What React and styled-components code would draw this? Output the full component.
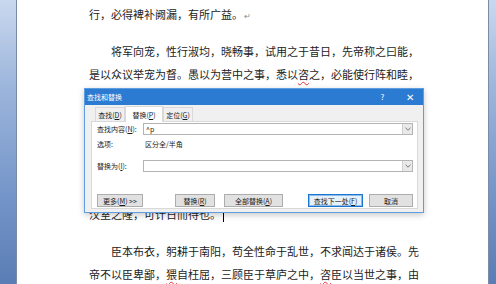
import React from 'react';
import styled, { createGlobalStyle } from 'styled-components';

const Global = createGlobalStyle`
  html, body { margin: 0; padding: 0; }
  body {
    width: 496px;
    height: 284px;
    overflow: hidden;
    background: #fff;
    font-family: "Noto Sans CJK SC", "Noto Sans", sans-serif;
  }
`;

const Frame = styled.div`
  position: relative;
  display: flex;
  width: 496px;
  height: 284px;
  overflow: hidden;
`;

// blue workspace on both sides of the page
const Side = styled.div`
  flex: none;
  width: ${p => p.$w}px;
  background: linear-gradient(180deg, #c9d8ee 0%, #9db6dc 30%, #7394c8 70%, #5a7db5 100%);
  border-${p => p.$edge}: 1px solid #7d8ca6;
`;

const Page = styled.div`
  flex: 1;
  background: #fff;
  padding: 3px 0 0 72px;
`;

const Para = styled.div`
  margin-top: ${p => p.$gap ?? 14}px;
  &:first-child { margin-top: 0; }
`;

const Line = styled.div`
  height: 23px;
  line-height: 23px;
  font-size: 11px;
  color: #1c1c1c;
  white-space: nowrap;
  padding-left: ${p => (p.$indent ? 22 : 0)}px;
`;

const Typo = styled.span`
  text-decoration: underline wavy #e03030;
  text-decoration-thickness: 1px;
  text-underline-offset: 2px;
`;

const Mark = styled.span`
  font-size: 8px;
  color: #8a8a8a;
  margin-left: 1px;
`;

const Caret = styled.span`
  display: inline-block;
  width: 1px;
  height: 12px;
  background: #000;
  margin-left: 2px;
  vertical-align: middle;
`;

// find & replace dialog, floating over the page
const Dialog = styled.div`
  position: absolute;
  left: 84px;
  top: 88px;
  width: 340px;
  height: 125px;
  box-sizing: border-box;
  display: flex;
  flex-direction: column;
  border: 1px solid #5e9ddf;
  background: #f0f0f0;
  box-shadow: 0 2px 6px rgba(0, 0, 0, 0.22);
  font-family: "Noto Sans CJK SC", sans-serif;
  font-size: 7px;
  color: #1a1a1a;
`;

const TitleBar = styled.div`
  flex: none;
  height: 16px;
  display: flex;
  align-items: center;
  background: #2c7bd2;
  color: #fff;
  padding-left: 2px;
`;

const Title = styled.span`
  flex: 1;
`;

const TitleBtn = styled.span`
  width: 27px;
  text-align: center;
  font-size: ${p => p.$size}px;
  line-height: 16px;
`;

const Body = styled.div`
  flex: 1;
  display: flex;
  flex-direction: column;
  padding: 0 5px 3px 6px;
`;

const Tabs = styled.div`
  flex: none;
  height: 16px;
  display: flex;
  align-items: flex-end;
  padding-left: 4px;
`;

const Tab = styled.div`
  height: ${p => (p.$active ? 16 : 14)}px;
  width: ${p => p.$w}px;
  box-sizing: border-box;
  display: flex;
  align-items: center;
  justify-content: center;
  background: ${p => (p.$active ? '#fff' : '#f0f0f0')};
  border: 1px solid #d9d9d9;
  border-bottom: none;
  margin-bottom: ${p => (p.$active ? -1 : 0)}px;
  position: relative;
  z-index: ${p => (p.$active ? 1 : 0)};
  u { text-decoration: underline; }
`;

const Panel = styled.div`
  flex: 1;
  display: flex;
  flex-direction: column;
  background: #fff;
  border: 1px solid #d9d9d9;
  padding: 0 4px 0 5px;
`;

const Row = styled.div`
  display: flex;
  align-items: center;
  height: ${p => p.$h}px;
  margin-top: ${p => p.$mt}px;
`;

const Label = styled.span`
  flex: none;
  width: ${p => p.$w}px;
`;

const Field = styled.div`
  flex: 1;
  height: 12px;
  box-sizing: border-box;
  display: flex;
  align-items: center;
  border: 1px solid #b4b4b4;
  background: #fff;
  padding-left: 2px;
`;

const FieldText = styled.span`
  flex: 1;
`;

const Drop = styled.span`
  width: 9px;
  height: 10px;
  display: flex;
  align-items: center;
  justify-content: center;
  background: #e9e9e9;
  border-left: 1px solid #d0d0d0;
`;

const Btn = styled.div`
  flex: none;
  width: ${p => p.$w}px;
  margin-left: ${p => p.$ml}px;
  height: 13px;
  box-sizing: border-box;
  display: flex;
  align-items: center;
  justify-content: center;
  background: ${p => (p.$focus ? '#e5f1fb' : '#e1e1e1')};
  border: 1px solid ${p => (p.$focus ? '#1a74d1' : '#adadad')};
  box-shadow: ${p => (p.$focus ? 'inset 0 0 0 1px #8fbbe8' : 'none')};
  u { text-decoration: underline; }
`;

const Chevron = () => (
  <svg width="6" height="4" viewBox="0 0 6 4">
    <path d="M0.5 0.8 L3 3.2 L5.5 0.8" fill="none" stroke="#6b6b6b" strokeWidth="0.9" />
  </svg>
);

export default function App() {
  return (
    <Frame>
      <Global />
      <Side $w={16} $edge="right" />
      <Page>
        <Para>
          <Line>行，必得裨补阙漏，有所广益。<Mark>↵</Mark></Line>
        </Para>
        <Para>
          <Line $indent>将军向宠，性行淑均，晓畅事，试用之于昔日，先帝称之曰能，</Line>
          <Line>是以众议举宠为督。愚以为营中之事，悉以<Typo>咨</Typo>之，必能使行阵和睦，</Line>
        </Para>
        {/* lines under the dialog are not visible */}
        <Para $gap={117}>
          <Line>汉室之隆，可计日而待也。<Caret /></Line>
        </Para>
        <Para>
          <Line $indent>臣本布衣，躬耕于南阳，苟全性命于乱世，不求闻达于诸侯。先</Line>
          <Line>帝不以臣卑鄙，<Typo>猥</Typo>自枉屈，三顾臣于草庐之中，<Typo>咨</Typo>臣以当世之事，由</Line>
        </Para>
      </Page>
      <Side $w={7} $edge="left" />

      <Dialog>
        <TitleBar>
          <Title>查找和替换</Title>
          <TitleBtn $size={8}>?</TitleBtn>
          <TitleBtn $size={10}>✕</TitleBtn>
        </TitleBar>
        <Body>
          <Tabs>
            <Tab $w={30}>查找(<u>D</u>)</Tab>
            <Tab $w={38} $active>替换(<u>P</u>)</Tab>
            <Tab $w={30}>定位(<u>G</u>)</Tab>
          </Tabs>
          <Panel>
            <Row $h={12} $mt={1}>
              <Label $w={46}>查找内容(<u>N</u>):</Label>
              <Field>
                <FieldText>^p</FieldText>
                <Drop><Chevron /></Drop>
              </Field>
            </Row>
            <Row $h={10} $mt={4}>
              <Label $w={48}>选项:</Label>
              <span>区分全/半角</span>
            </Row>
            <Row $h={12} $mt={11}>
              <Label $w={46}>替换为(<u>I</u>):</Label>
              <Field>
                <FieldText />
                <Drop><Chevron /></Drop>
              </Field>
            </Row>
            <Row $h={13} $mt={22}>
              <Btn $w={46} $ml={0}>更多(<u>M</u>) &gt;&gt;</Btn>
              <Btn $w={40} $ml={32}>替换(<u>R</u>)</Btn>
              <Btn $w={59} $ml={9}>全部替换(<u>A</u>)</Btn>
              <Btn $w={55} $ml={25} $focus>查找下一处(<u>F</u>)</Btn>
              <Btn $w={44} $ml={6}>取消</Btn>
            </Row>
          </Panel>
        </Body>
      </Dialog>
    </Frame>
  );
}
